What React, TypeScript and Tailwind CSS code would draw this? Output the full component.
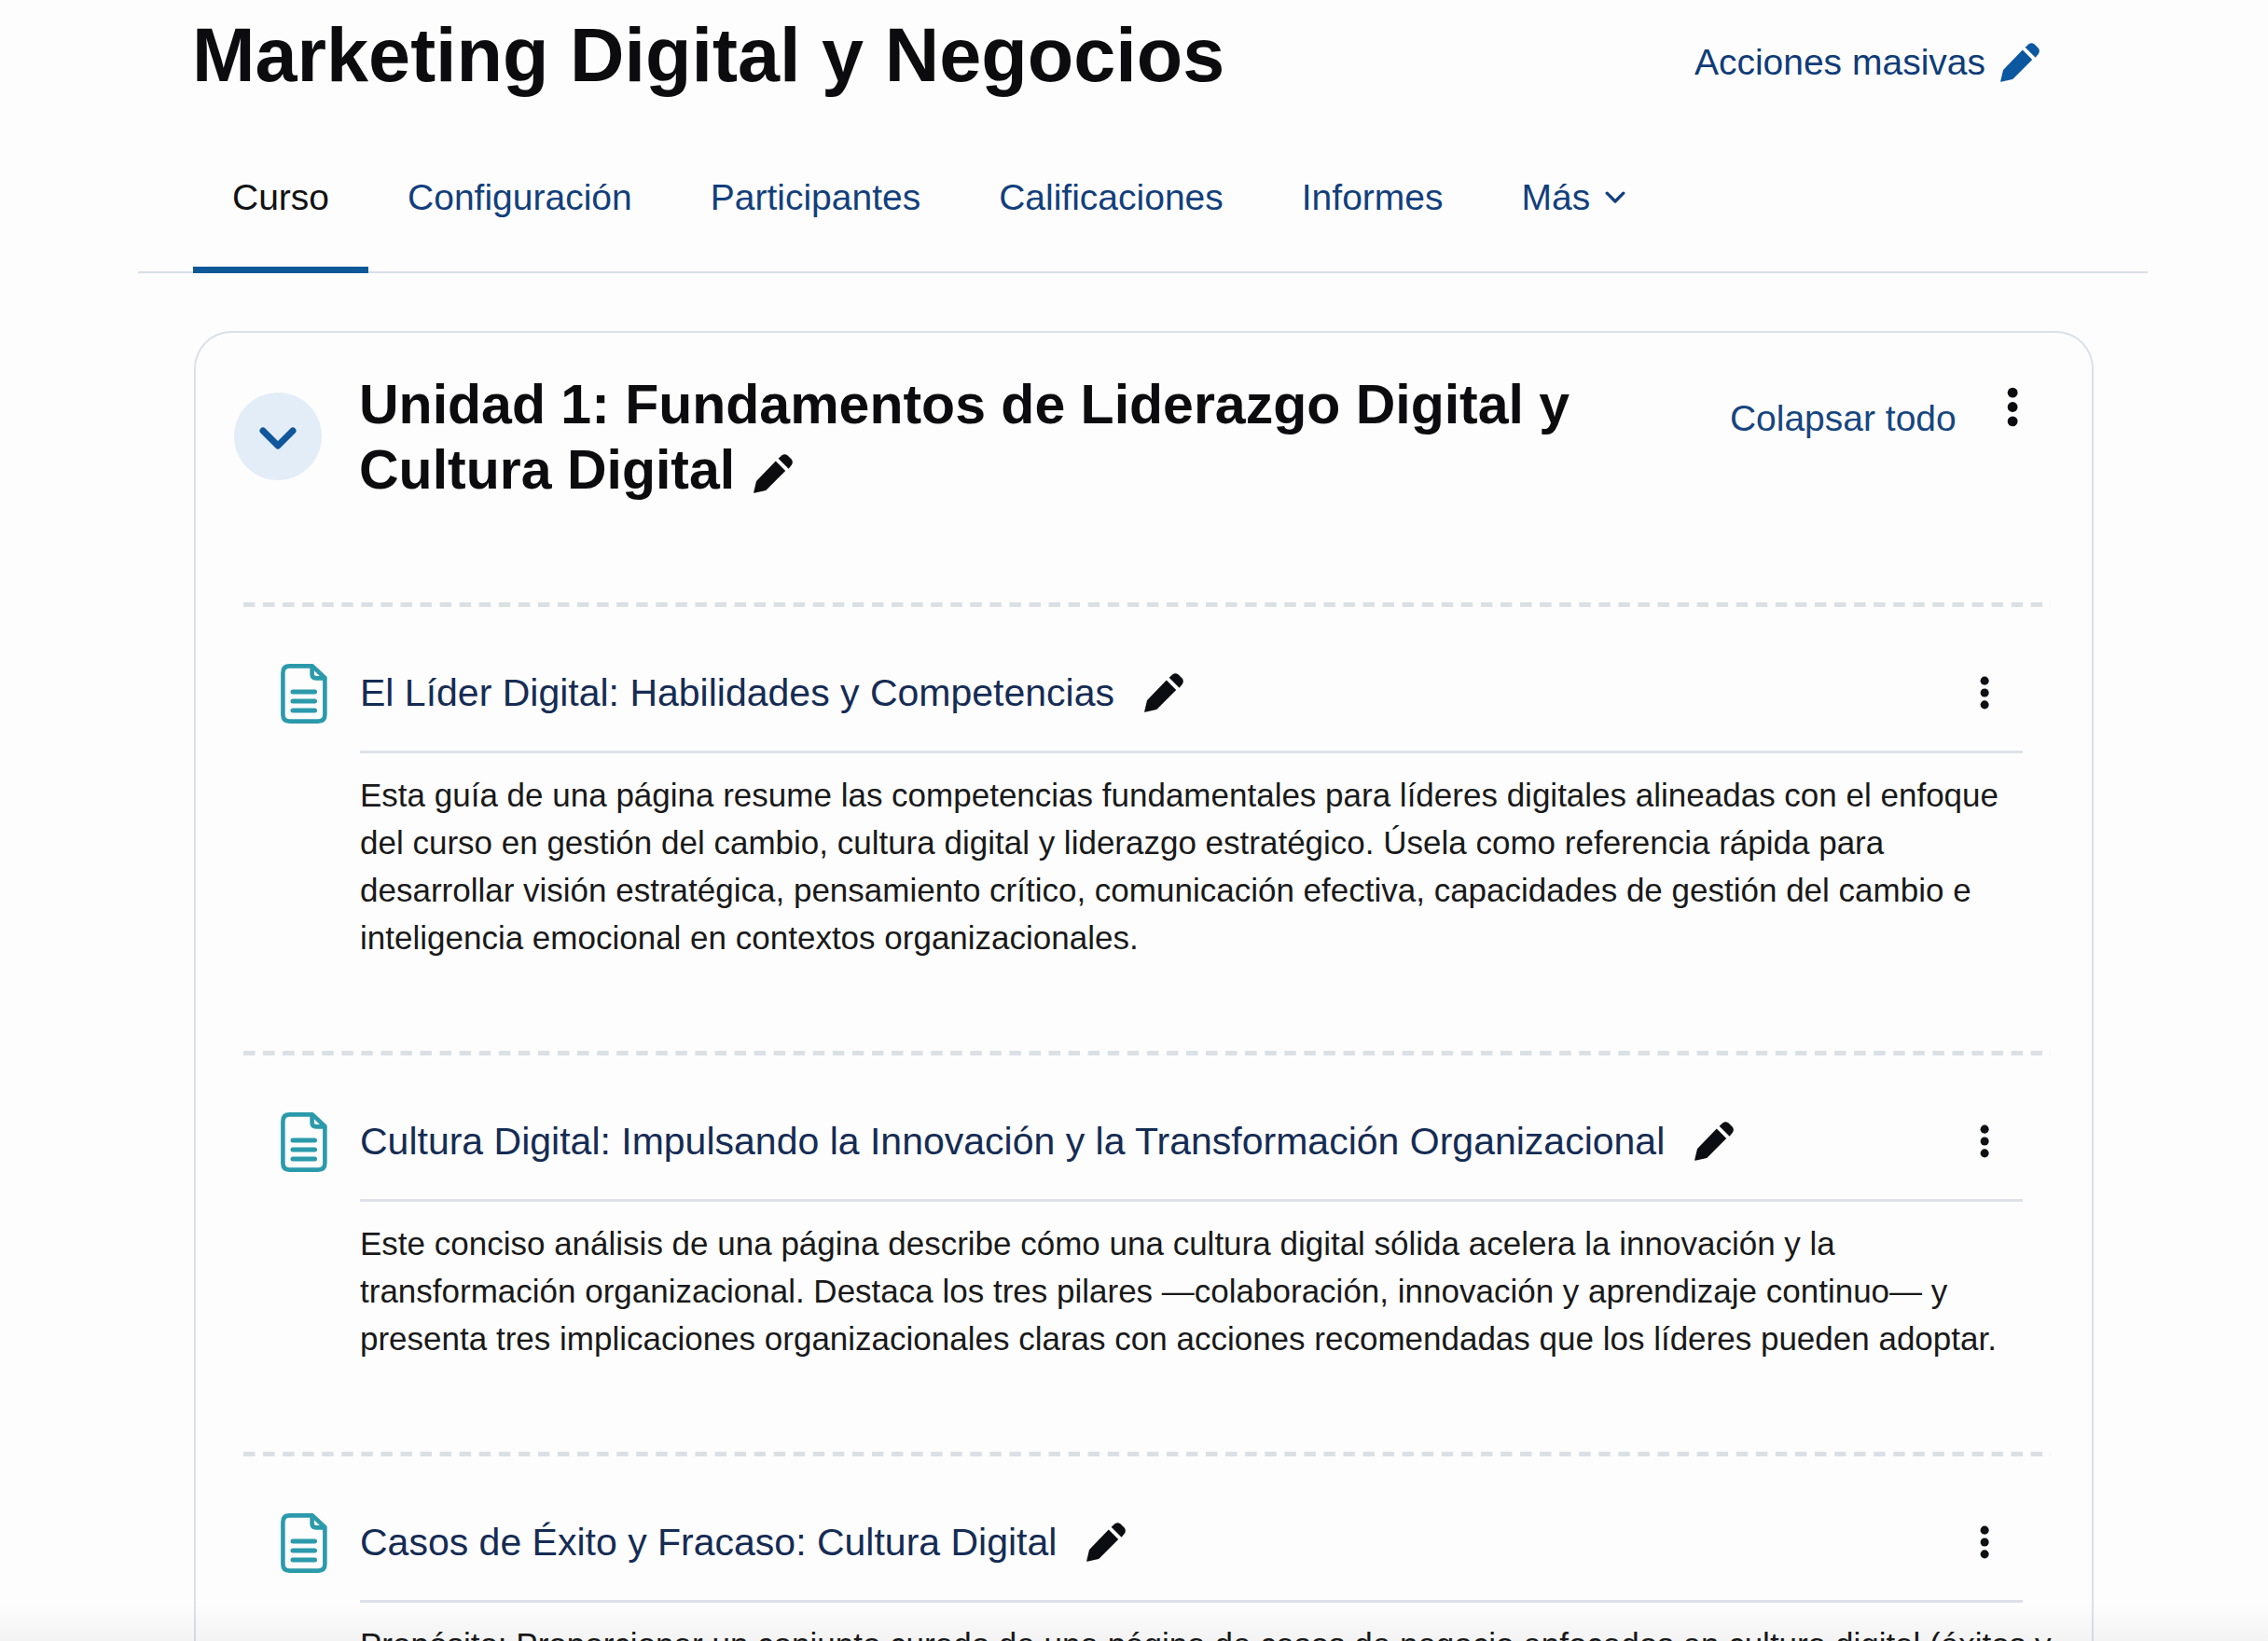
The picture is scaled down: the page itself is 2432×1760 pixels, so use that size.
import clsx from "clsx";
import type { ReactNode } from "react";

interface Tab {
  title: string;
  href: string;
  active?: boolean;
  menu?: boolean;
}

interface Activity {
  title: string;
  description: string;
  wide?: boolean;
}

const tabs: Tab[] = [
  { title: "Curso", href: "#curso", active: true },
  { title: "Configuración", href: "#configuracion" },
  { title: "Participantes", href: "#participantes" },
  { title: "Calificaciones", href: "#calificaciones" },
  { title: "Informes", href: "#informes" },
  { title: "Más", href: "#mas", menu: true },
];

const activities: Activity[] = [
  {
    title: "El Líder Digital: Habilidades y Competencias",
    description:
      "Esta guía de una página resume las competencias fundamentales para líderes digitales alineadas con el enfoque del curso en gestión del cambio, cultura digital y liderazgo estratégico. Úsela como referencia rápida para desarrollar visión estratégica, pensamiento crítico, comunicación efectiva, capacidades de gestión del cambio e inteligencia emocional en contextos organizacionales.",
  },
  {
    title:
      "Cultura Digital: Impulsando la Innovación y la Transformación Organizacional",
    description:
      "Este conciso análisis de una página describe cómo una cultura digital sólida acelera la innovación y la transformación organizacional. Destaca los tres pilares —colaboración, innovación y aprendizaje continuo— y presenta tres implicaciones organizacionales claras con acciones recomendadas que los líderes pueden adoptar.",
  },
  {
    title: "Casos de Éxito y Fracaso: Cultura Digital",
    description:
      "Propósito: Proporcionar un conjunto curado de una página de casos de negocio enfocados en cultura digital (éxitos y",
    wide: true,
  },
];

function PencilIcon({ className }: { className?: string }) {
  return (
    <svg
      viewBox="0 0 42 42"
      fill="currentColor"
      aria-hidden="true"
      className={clsx("size-[42px] shrink-0", className)}
    >
      <path d="M26.6 4.8 30.6 1.2Q33.6-.8 36.6 1.6L40.6 5.6Q43 8.6 40.8 11.8L37.6 15.8Z" />
      <path d="M23.8 7.4 34.2 18 14 38.2Q13.2 39 12 39.3L.8 41.8Q0 41.8.2 41L2.8 30Q3 29 3.8 28.2Z" />
    </svg>
  );
}

function ChevronIcon({
  className,
  strokeWidth,
}: {
  className?: string;
  strokeWidth: number;
}) {
  return (
    <svg
      viewBox="0 0 40 24"
      fill="none"
      stroke="currentColor"
      strokeWidth={strokeWidth}
      strokeLinecap="round"
      strokeLinejoin="round"
      aria-hidden="true"
      className={className}
    >
      <path d="M4 4 20 20 36 4" />
    </svg>
  );
}

function KebabIcon({ className }: { className?: string }) {
  return (
    <svg
      viewBox="0 0 12 42"
      fill="currentColor"
      aria-hidden="true"
      className={className}
    >
      <circle cx="6" cy="6" r="5.3" />
      <circle cx="6" cy="21" r="5.3" />
      <circle cx="6" cy="36" r="5.3" />
    </svg>
  );
}

function PageIcon() {
  return (
    <svg
      viewBox="0 0 50 64"
      fill="none"
      stroke="currentColor"
      strokeWidth="4.6"
      strokeLinecap="round"
      strokeLinejoin="round"
      aria-hidden="true"
      className="h-16 w-[50px] shrink-0 text-[#2b9aab]"
    >
      <path d="M9.5 2.4H34L47.4 15V54.5Q47.4 61.6 40 61.6H9.5Q2.4 61.6 2.4 54.5V9.5Q2.4 2.4 9.5 2.4Z" />
      <path d="M33.6 3V11Q33.6 15.4 38 15.4H47" />
      <path d="M13 30H36.5M13 40H36.5M13 50H36.5" strokeWidth="5" />
    </svg>
  );
}

function IconButton({
  label,
  className,
  children,
}: {
  label: string;
  className?: string;
  children: ReactNode;
}) {
  return (
    <button type="button" aria-label={label} className={className}>
      {children}
    </button>
  );
}

function ActivityItem({ activity }: { activity: Activity }) {
  return (
    <li>
      <div className="h-[5px] bg-[linear-gradient(90deg,#dbe0e5_60%,transparent_60%)] bg-[length:21px_5px] bg-repeat-round" />
      <div className="flex gap-[35px] pr-[30px] pb-24 pl-10">
        <div className="pt-[61px]">
          <PageIcon />
        </div>
        <div className="min-w-0 flex-1">
          <div className="flex h-[157px] items-center border-b-3 border-[#dfe1ea] pt-[30px] pr-9">
            <a
              href="#actividad"
              className="text-[41px] leading-[52px] text-[#152c54]"
            >
              {activity.title}
            </a>
            <IconButton
              label={`Editar ${activity.title}`}
              className="ml-8 text-[#0c0d12]"
            >
              <PencilIcon />
            </IconButton>
            <IconButton
              label="Acciones de la actividad"
              className="ml-auto text-[#0e1014]"
            >
              <KebabIcon className="h-9" />
            </IconButton>
          </div>
          <p
            className={clsx(
              "pt-[19px] text-[35px] leading-[51px] text-[#191919]",
              activity.wide && "-mr-16",
            )}
          >
            {activity.description}
          </p>
        </div>
      </div>
    </li>
  );
}

export default function App() {
  return (
    <div className="relative h-screen overflow-hidden bg-[#fdfdfd] pr-[129px] pl-37 font-['Liberation_Sans',Arial,sans-serif]">
      <header className="flex items-start justify-between pt-[11px] pr-[116px] pl-[58px]">
        <h1 className="text-[81px] leading-24 font-bold text-[#0c0c0e]">
          Marketing Digital y Negocios
        </h1>
        <button
          type="button"
          className="flex items-center gap-4 pt-8 text-[39px] leading-12 text-[#0f3c78]"
        >
          Acciones masivas
          <PencilIcon className="text-[#0b57a0]" />
        </button>
      </header>

      <nav className="mt-[81px] border-b-2 border-[#d9dee8] px-[59px]">
        <ul className="flex">
          {tabs.map((tab) => (
            <li key={tab.title}>
              <a
                href={tab.href}
                className={clsx(
                  "-mb-[2px] flex items-center border-b-[7px] px-[42px] pb-[50px] text-[39px] leading-12",
                  tab.active
                    ? "border-[#0f5898] text-[#121212]"
                    : "border-transparent text-[#123f7c]",
                )}
              >
                {tab.title}
                {tab.menu && (
                  <ChevronIcon strokeWidth={6} className="ml-4 w-[22px]" />
                )}
              </a>
            </li>
          ))}
        </ul>
      </nav>

      <main className="mt-[62px] mr-[58px] ml-[60px] rounded-t-[40px] border-2 border-b-0 border-[#dbe0ea] pt-[42px]">
        <div className="flex items-start pr-[79px] pl-[41px]">
          <IconButton
            label="Colapsar unidad"
            className="mt-[22px] flex size-[94px] shrink-0 items-center justify-center rounded-full bg-[#e3edf8] text-[#10569a]"
          >
            <ChevronIcon strokeWidth={7} className="mt-1 w-10 overflow-visible" />
          </IconButton>
          <h2 className="ml-10 flex-1 text-[59px] leading-[70px] font-bold text-[#0c0c0e]">
            Unidad 1: Fundamentos de Liderazgo Digital y Cultura Digital
            <IconButton label="Editar unidad" className="ml-5 align-middle">
              <PencilIcon />
            </IconButton>
          </h2>
          <button
            type="button"
            className="mt-[26px] ml-10 text-[39px] leading-12 text-[#17457f]"
          >
            Colapsar todo
          </button>
          <IconButton
            label="Acciones de la unidad"
            className="mt-4 ml-[54px] text-[#0c0c0e]"
          >
            <KebabIcon className="h-[43px]" />
          </IconButton>
        </div>
        <ul className="mt-[107px] mr-[44px] ml-[51px]">
          {activities.map((activity) => (
            <ActivityItem key={activity.title} activity={activity} />
          ))}
        </ul>
      </main>

      <div className="pointer-events-none absolute inset-x-0 bottom-0 h-10 bg-linear-to-b from-transparent to-black/4" />
    </div>
  );
}
